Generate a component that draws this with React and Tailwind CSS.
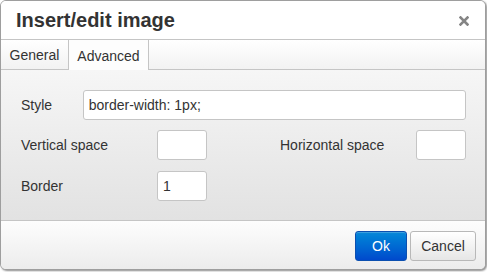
import React from 'react';

const font = { fontFamily: '"Liberation Sans", Arial, sans-serif' };

const Field = ({ value = '', className = '' }) => (
  <input
    readOnly
    value={value}
    className={`h-[30px] rounded-[3px] border border-[#c5c5c5] bg-white px-[5px] text-[14px] text-[#333] outline-none ${className}`}
  />
);

const App = () => {
  return (
    <div className="w-[487px] h-[272px] bg-white" style={font}>
      <div className="flex h-[270px] w-[486px] flex-col overflow-hidden rounded-[6px] border border-[#9e9e9e] bg-white shadow-[1px_1px_2px_rgba(0,0,0,0.45)]">
        {/* header */}
        <div className="flex h-[39px] shrink-0 items-center justify-between border-b border-[#c5c5c5] bg-white pl-[15px] pr-[16px]">
          <h1 className="text-[20px] font-bold leading-none text-[#333]">Insert/edit image</h1>
          <svg width="10" height="10" viewBox="0 0 10 10" className="mt-[1px]">
            <path d="M1.5 1.5 L8.5 8.5 M8.5 1.5 L1.5 8.5" stroke="#858585" strokeWidth="2.6" strokeLinecap="square" />
          </svg>
        </div>

        {/* tabs */}
        <div className="flex h-[30px] shrink-0 border-b border-[#c5c5c5] bg-gradient-to-b from-white to-[#f2f2f2]">
          <div className="flex w-[68px] items-center justify-center border-r border-[#c5c5c5] pt-[2px] text-[14px] text-[#333]">
            General
          </div>
          <div className="-mb-px flex w-[80px] items-center justify-center border-r border-[#c5c5c5] bg-[#fdfdfd] pt-[2px] text-[14px] text-[#333]">
            Advanced
          </div>
        </div>

        {/* body */}
        <div className="flex h-[150px] shrink-0 flex-col bg-gradient-to-b from-[#f6f6f6] to-[#e2e2e2] pl-[20px] pr-[19px] pt-[20px]">
          <div className="flex items-center">
            <span className="w-[62px] text-[14px] text-[#333]">Style</span>
            <Field value="border-width: 1px;" className="w-[385px]" />
          </div>
          <div className="mt-[10px] flex items-center">
            <span className="w-[136px] text-[14px] text-[#333]">Vertical space</span>
            <Field className="w-[50px]" />
            <span className="ml-[73px] w-[136px] text-[14px] text-[#333]">Horizontal space</span>
            <Field className="w-[50px]" />
          </div>
          <div className="mt-[11px] flex items-center">
            <span className="w-[136px] text-[14px] text-[#333]">Border</span>
            <Field value="1" className="h-[29px] w-[50px]" />
          </div>
        </div>

        {/* footer */}
        <div className="flex flex-1 items-start justify-end gap-[3px] border-t border-[#c5c5c5] bg-gradient-to-b from-[#fdfdfd] to-[#ececec] pr-[9px] pt-[10px]">
          <button className="h-[30px] w-[52px] rounded-[3px] border border-[#0b4fb0] bg-gradient-to-b from-[#0a88d8] to-[#0049cc] text-[14px] text-white shadow-[inset_0_1px_0_rgba(255,255,255,0.2)]">
            Ok
          </button>
          <button className="h-[30px] w-[66px] rounded-[3px] border border-[#b8b8b8] bg-gradient-to-b from-white to-[#e6e6e6] text-[14px] text-[#333]">
            Cancel
          </button>
        </div>
      </div>
    </div>
  );
};

export default App;
